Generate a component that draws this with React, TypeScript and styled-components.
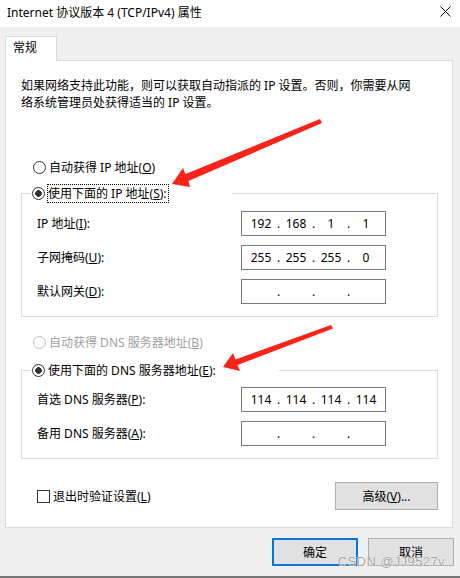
import React from "react";
import styled, { createGlobalStyle } from "styled-components";

const GlobalStyle = createGlobalStyle`
  html, body {
    margin: 0;
    padding: 0;
    background: #f0f0f0;
  }
  body {
    font-family: "Noto Sans", "Noto Sans CJK SC", sans-serif;
    font-size: 12px;
    color: #000;
  }
`;

const Window = styled.div`
  position: relative;
  width: 460px;
  height: 578px;
  box-sizing: border-box;
  background: #f0f0f0;
  border-bottom: 2px solid #777;
  display: flex;
  flex-direction: column;
  overflow: hidden;
`;

const TitleBar = styled.div`
  height: 27px;
  flex-shrink: 0;
  box-sizing: border-box;
  background: #fff;
  display: flex;
  align-items: center;
  justify-content: space-between;
  padding: 0 9px 0 7px;
`;

const Title = styled.span`
  line-height: 17px;
  margin-top: -2px;
`;

const Body = styled.div`
  display: flex;
  flex-direction: column;
  padding: 9px 7px 0 5px;
`;

const Tab = styled.div`
  position: relative;
  z-index: 1;
  align-self: flex-start;
  width: 52px;
  height: 25px;
  box-sizing: border-box;
  margin-bottom: -1px;
  padding-left: 7px;
  background: #fff;
  border: 1px solid #d9d9d9;
  border-bottom: none;
  line-height: 22px;
`;

const Panel = styled.div`
  background: #fff;
  border: 1px solid #d9d9d9;
  padding: 16px 14px 17px 15px;
  display: flex;
  flex-direction: column;
`;

const Description = styled.p`
  margin: 0;
  line-height: 17px;
`;

const RadioRow = styled.div<{ $top: number }>`
  display: flex;
  align-items: center;
  height: 19px;
  margin-top: ${(p) => p.$top}px;
  padding-left: 11px;
`;

const LegendRow = styled.div`
  display: flex;
  align-items: center;
  height: 19px;
`;

const Radio = styled.span<{ $checked?: boolean; $disabled?: boolean }>`
  width: 13px;
  height: 13px;
  box-sizing: border-box;
  margin-left: 1px;
  border-radius: 50%;
  border: 1px solid ${(p) => (p.$disabled ? "#bcbcbc" : "#333")};
  background: ${(p) =>
    p.$checked
      ? "radial-gradient(circle, #333 0 3px, #fff 3.6px)"
      : "#fff"};
  flex-shrink: 0;
`;

const RadioText = styled.span<{ $focused?: boolean; $disabled?: boolean }>`
  margin-left: 2px;
  padding-right: 1px;
  line-height: 17px;
  border: 1px ${(p) => (p.$focused ? "dotted #000" : "solid transparent")};
  color: ${(p) => (p.$disabled ? "#a0a0a0" : "#000")};
  white-space: nowrap;
`;

const Group = styled.fieldset<{ $top: number }>`
  margin: ${(p) => p.$top}px 0 0 0;
  padding: 0;
  min-width: 0;
  border: 1px solid #dcdcdc;
`;

const Legend = styled.legend<{ $width: number }>`
  padding: 0;
  margin-left: 9px;
  width: ${(p) => p.$width}px;
`;

const FieldGrid = styled.div<{ $top: number }>`
  display: grid;
  grid-template-columns: 1fr 145px;
  row-gap: 9px;
  align-items: center;
  padding: ${(p) => p.$top}px 51px 12px 15px;
`;

const FieldLabel = styled.span`
  line-height: 17px;
  white-space: nowrap;
`;

const IpField = styled.div`
  display: flex;
  align-items: center;
  height: 25px;
  box-sizing: border-box;
  padding-left: 5px;
  border: 1px solid #7a7a7a;
  background: #fff;
`;

const Octet = styled.span`
  width: 28px;
  text-align: center;
  line-height: 17px;
`;

const Dot = styled.span`
  width: 7px;
  text-align: center;
  line-height: 17px;
`;

const BottomRow = styled.div`
  display: flex;
  align-items: center;
  justify-content: space-between;
  margin-top: 23px;
  padding-left: 16px;
`;

const CheckLabel = styled.label`
  display: flex;
  align-items: center;
`;

const CheckBox = styled.span`
  width: 13px;
  height: 13px;
  box-sizing: border-box;
  border: 1px solid #333;
  background: #fff;
`;

const CheckText = styled.span`
  margin-left: 3px;
  line-height: 17px;
`;

const Button = styled.button<{ $width: number; $default?: boolean }>`
  width: ${(p) => p.$width}px;
  height: 28px;
  box-sizing: border-box;
  padding: 0;
  font: inherit;
  color: #000;
  background: #e1e1e1;
  border: ${(p) => (p.$default ? "2px solid #0078d7" : "1px solid #adadad")};
`;

const Footer = styled.div`
  display: flex;
  justify-content: flex-end;
  gap: 10px;
  margin: 10px -1px 0 0;
`;

const Watermark = styled.span`
  position: absolute;
  right: 15px;
  bottom: 7px;
  font-family: "Liberation Sans", sans-serif;
  font-size: 13px;
  letter-spacing: 0.4px;
  line-height: 15px;
  color: rgba(130, 130, 130, 0.75);
  text-shadow: 0 0 1px #fff, 0 0 1px #fff;
  pointer-events: none;
`;

const Overlay = styled.svg`
  position: absolute;
  left: 0;
  top: 0;
  pointer-events: none;
`;

const CloseIcon = () => (
  <svg width="11" height="11" viewBox="0 0 11 11" style={{ marginTop: -4 }}>
    <path d="M0.5 0.5 L10.5 10.5 M10.5 0.5 L0.5 10.5" stroke="#000" strokeWidth="1" />
  </svg>
);

const IpBox = ({ parts }: { parts: string[] }) => (
  <IpField>
    {parts.map((p, i) => (
      <React.Fragment key={i}>
        {i > 0 && <Dot>.</Dot>}
        <Octet>{p}</Octet>
      </React.Fragment>
    ))}
  </IpField>
);

const empty = ["", "", "", ""];

export default function App() {
  return (
    <>
      <GlobalStyle />
      <Window>
        <TitleBar>
          <Title>Internet 协议版本 4 (TCP/IPv4) 属性</Title>
          <CloseIcon />
        </TitleBar>
        <Body>
          <Tab>常规</Tab>
          <Panel>
            <Description>
              如果网络支持此功能，则可以获取自动指派的 IP 设置。否则，你需要从网
              <br />
              络系统管理员处获得适当的 IP 设置。
            </Description>

            <RadioRow $top={47}>
              <Radio />
              <RadioText>
                自动获得 IP 地址(<u>O</u>)
              </RadioText>
            </RadioRow>

            <Group $top={7}>
              <Legend $width={201}>
                <LegendRow>
                  <Radio $checked />
                  <RadioText $focused>
                    使用下面的 IP 地址(<u>S</u>):
                  </RadioText>
                </LegendRow>
              </Legend>
              <FieldGrid $top={8}>
                <FieldLabel>
                  IP 地址(<u>I</u>):
                </FieldLabel>
                <IpBox parts={["192", "168", "1", "1"]} />
                <FieldLabel>
                  子网掩码(<u>U</u>):
                </FieldLabel>
                <IpBox parts={["255", "255", "255", "0"]} />
                <FieldLabel>
                  默认网关(<u>D</u>):
                </FieldLabel>
                <IpBox parts={empty} />
              </FieldGrid>
            </Group>

            <RadioRow $top={16}>
              <Radio $disabled />
              <RadioText $disabled>
                自动获得 DNS 服务器地址(<u>B</u>)
              </RadioText>
            </RadioRow>

            <Group $top={9}>
              <Legend $width={248}>
                <LegendRow>
                  <Radio $checked />
                  <RadioText>
                    使用下面的 DNS 服务器地址(<u>E</u>):
                  </RadioText>
                </LegendRow>
              </Legend>
              <FieldGrid $top={7}>
                <FieldLabel>
                  首选 DNS 服务器(<u>P</u>):
                </FieldLabel>
                <IpBox parts={["114", "114", "114", "114"]} />
                <FieldLabel>
                  备用 DNS 服务器(<u>A</u>):
                </FieldLabel>
                <IpBox parts={empty} />
              </FieldGrid>
            </Group>

            <BottomRow>
              <CheckLabel>
                <CheckBox />
                <CheckText>
                  退出时验证设置(<u>L</u>)
                </CheckText>
              </CheckLabel>
              <Button $width={103}>
                高级(<u>V</u>)...
              </Button>
            </BottomRow>
          </Panel>

          <Footer>
            <Button $width={86} $default>
              确定
            </Button>
            <Button $width={86}>取消</Button>
          </Footer>
        </Body>

        <Watermark>CSDN @JJ9527v</Watermark>

        <Overlay width="460" height="578" viewBox="0 0 460 578">
          <polygon
            points="172,184 183,168 185.5,174 320,119 322,123 188.5,181 190,187"
            fill="#f82419"
          />
          <polygon
            points="223,367 233,353 235.5,359.5 331,325 333,328.5 237.5,365 240,371"
            fill="#f82419"
          />
        </Overlay>
      </Window>
    </>
  );
}
